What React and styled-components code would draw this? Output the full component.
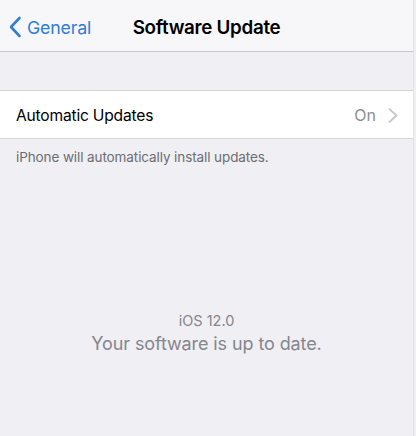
import styled, { createGlobalStyle } from 'styled-components';

const GlobalStyle = createGlobalStyle`
  html, body {
    margin: 0;
    padding: 0;
    background: #efeff4;
  }
  body {
    font-family: Inter, "Noto Sans", "Liberation Sans", sans-serif;
    -webkit-font-smoothing: antialiased;
  }
`;

export default function App() {
  return (
    <>
      <GlobalStyle />
      <Screen>
        <NavBar>
          <BackButton>
            <svg width="14" height="22" viewBox="0 0 14 22" fill="none">
              <path d="M11.5 2 L3 11 L11.5 20" stroke="#2f7ed8" strokeWidth="2.6" strokeLinecap="round" strokeLinejoin="round" />
            </svg>
            <span>General</span>
          </BackButton>
          <Title>Software Update</Title>
        </NavBar>

        <Group>
          <Cell>
            <CellLabel>Automatic Updates</CellLabel>
            <CellValue>
              On
              <svg width="10" height="15" viewBox="0 0 10 15" fill="none">
                <path d="M1.5 1.2 L8.5 7.5 L1.5 13.8" stroke="#c4c4c9" strokeWidth="1.8" strokeLinecap="round" strokeLinejoin="round" />
              </svg>
            </CellValue>
          </Cell>
        </Group>
        <Footer>iPhone will automatically install updates.</Footer>

        <Status>
          <Version>iOS 12.0</Version>
          <Message>Your software is up to date.</Message>
        </Status>
      </Screen>
    </>
  );
}

const Screen = styled.div`
  width: 413px;
  height: 436px;
  border-right: 1px solid #e2e2e7;
  display: flex;
  flex-direction: column;
  background: #efeff4;
`;

const NavBar = styled.div`
  height: 48px;
  padding-top: 3px;
  background: #f7f7f9;
  border-bottom: 1px solid #c8c7cc;
  display: grid;
  grid-template-columns: 1fr auto 1fr;
  align-items: center;
`;

const BackButton = styled.div`
  display: flex;
  align-items: center;
  gap: 5px;
  padding-left: 8px;
  color: #2f7ed8;
  font-size: 17.8px;
  letter-spacing: -0.2px;
`;

const Title = styled.div`
  font-size: 18.8px;
  font-weight: 600;
  color: #000;
  letter-spacing: -0.3px;
`;

const Group = styled.div`
  margin-top: 38px;
  background: #fff;
  border-top: 1px solid #d6d6da;
  border-bottom: 1px solid #d6d6da;
`;

const Cell = styled.div`
  height: 46px;
  padding: 1px 15px 0 16px;
  display: flex;
  align-items: center;
  justify-content: space-between;
`;

const CellLabel = styled.span`
  font-size: 15.6px;
  color: #000;
  letter-spacing: -0.2px;
`;

const CellValue = styled.span`
  display: flex;
  align-items: center;
  gap: 12px;
  font-size: 16px;
  color: #8e8e93;
`;

const Footer = styled.div`
  padding: 10px 16px 0;
  font-size: 13.5px;
  color: #6d6d72;
  letter-spacing: -0.1px;
`;

const Status = styled.div`
  margin-top: 146px;
  display: flex;
  flex-direction: column;
  align-items: center;
  color: #86868b;
`;

const Version = styled.div`
  font-size: 14.5px;
  line-height: 20px;
`;

const Message = styled.div`
  font-size: 18px;
  line-height: 25px;
  letter-spacing: -0.1px;
`;
